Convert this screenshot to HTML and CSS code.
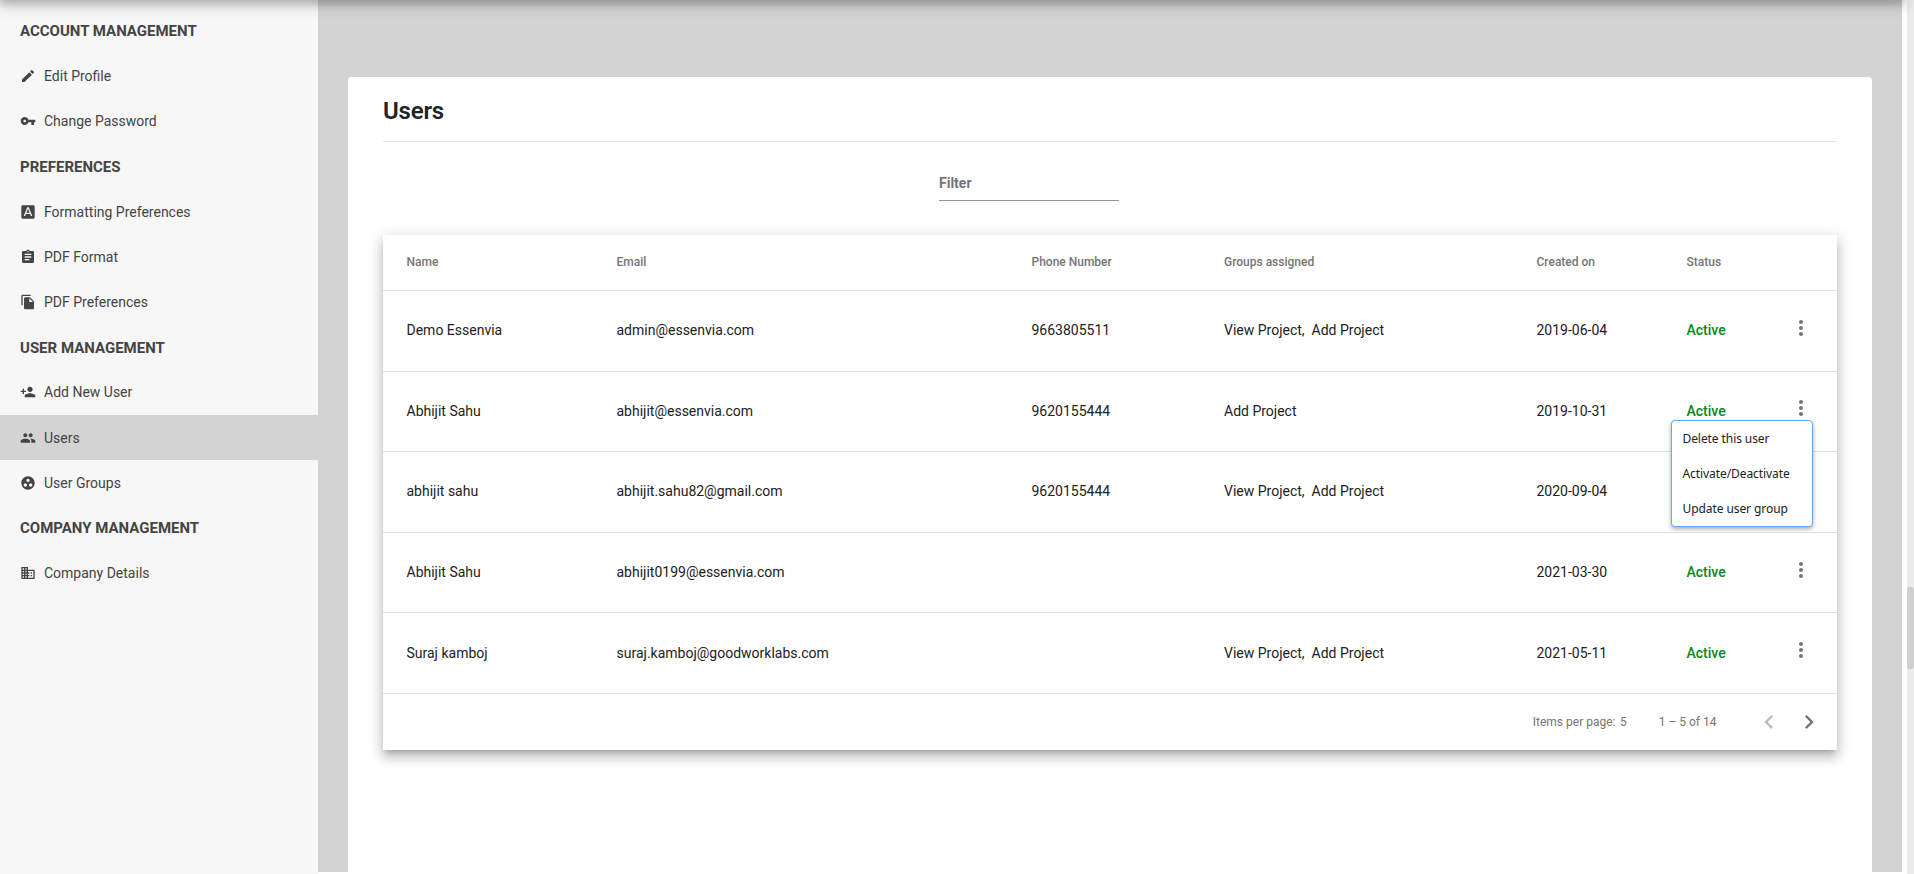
FILE: index.html
```html
<!DOCTYPE html>
<html lang="en">

<head>
    <meta charset="UTF-8" />
    <meta name="viewport" content="width=device-width, initial-scale=1.0" />
    <title>Users</title>
    <link rel="stylesheet" href="styles.css">
</head>

<body>
    <div class="topShadow"></div>
    <div class="layout">
        <!-- left navigation -->
        <div class="sidebar">
            <h4>ACCOUNT MANAGEMENT</h4>
            <a class="item">
                <svg viewBox="0 0 24 24"><path d="M3 17.25V21h3.75L17.81 9.94l-3.75-3.75L3 17.25zM20.71 7.04a1 1 0 0 0 0-1.41l-2.34-2.34a1 1 0 0 0-1.41 0l-1.83 1.83 3.75 3.75 1.83-1.83z" /></svg>
                <span>Edit Profile</span>
            </a>
            <a class="item">
                <svg viewBox="0 0 24 24"><path d="M12.65 10C11.83 7.67 9.61 6 7 6c-3.31 0-6 2.69-6 6s2.69 6 6 6c2.61 0 4.83-1.67 5.65-4H17v4h4v-4h2v-4H12.65zM7 14c-1.1 0-2-.9-2-2s.9-2 2-2 2 .9 2 2-.9 2-2 2z" /></svg>
                <span>Change Password</span>
            </a>
            <h4>PREFERENCES</h4>
            <a class="item">
                <svg viewBox="0 0 24 24"><path fill-rule="evenodd" d="M4 2h16a2 2 0 0 1 2 2v16a2 2 0 0 1-2 2H4a2 2 0 0 1-2-2V4a2 2 0 0 1 2-2zm1.500 16h2.100l1.140-3h6.500l1.120 3h2.140L13.120 5h-2.240L5.500 18zm3.930-4.800L12 6.980l2.570 6.220H9.430z" /></svg>
                <span>Formatting Preferences</span>
            </a>
            <a class="item">
                <svg viewBox="0 0 24 24"><path d="M19 3h-4.180C14.400 1.840 13.300 1 12 1c-1.300 0-2.400.84-2.820 2H5c-1.100 0-2 .9-2 2v14c0 1.100.9 2 2 2h14c1.100 0 2-.9 2-2V5c0-1.100-.9-2-2-2zm-7 0c.55 0 1 .45 1 1s-.45 1-1 1-1-.45-1-1 .45-1 1-1zm2 14H7v-2h7v2zm3-4H7v-2h10v2zm0-4H7V7h10v2z" /></svg>
                <span>PDF Format</span>
            </a>
            <a class="item">
                <svg viewBox="0 0 24 24"><path d="M16 1H4c-1.100 0-2 .9-2 2v14h2V3h12V1zm-1 4l6 6v10c0 1.100-.9 2-2 2H7.990C6.890 23 6 22.100 6 21l.01-14c0-1.100.89-2 1.990-2h7zm-1 7h5.500L14 6.500V12z" /></svg>
                <span>PDF Preferences</span>
            </a>
            <h4>USER MANAGEMENT</h4>
            <a class="item">
                <svg viewBox="0 0 24 24"><path d="M15 12c2.210 0 4-1.790 4-4s-1.790-4-4-4-4 1.790-4 4 1.790 4 4 4zm-9-2V7H4v3H1v2h3v3h2v-3h3v-2H6zm9 4c-2.670 0-8 1.340-8 4v2h16v-2c0-2.660-5.330-4-8-4z" /></svg>
                <span>Add New User</span>
            </a>
            <a class="item active">
                <svg viewBox="0 0 24 24"><path d="M16 11c1.660 0 2.990-1.340 2.990-3S17.660 5 16 5s-3 1.340-3 3 1.340 3 3 3zm-8 0c1.660 0 2.990-1.340 2.990-3S9.660 5 8 5 5 6.340 5 8s1.340 3 3 3zm0 2c-2.330 0-7 1.170-7 3.500V19h14v-2.500c0-2.330-4.670-3.500-7-3.500zm8 0c-.29 0-.62.02-.97.05 1.160.84 1.970 1.970 1.970 3.450V19h6v-2.500c0-2.330-4.670-3.500-7-3.500z" /></svg>
                <span>Users</span>
            </a>
            <a class="item">
                <svg viewBox="0 0 24 24"><path d="M12 2C6.480 2 2 6.480 2 12s4.480 10 10 10 10-4.480 10-10S17.520 2 12 2zM8 17.500c-1.380 0-2.500-1.120-2.500-2.500s1.120-2.500 2.500-2.500 2.500 1.120 2.500 2.500-1.120 2.500-2.500 2.500zM9.500 8c0-1.380 1.120-2.500 2.500-2.500s2.500 1.120 2.500 2.500-1.120 2.500-2.500 2.500S9.500 9.380 9.500 8zm6.500 9.500c-1.380 0-2.500-1.120-2.500-2.500s1.120-2.500 2.500-2.500 2.500 1.120 2.500 2.500-1.120 2.500-2.500 2.500z" /></svg>
                <span>User Groups</span>
            </a>
            <h4>COMPANY MANAGEMENT</h4>
            <a class="item">
                <svg viewBox="0 0 24 24"><path d="M12 7V3H2v18h20V7H12zM6 19H4v-2h2v2zm0-4H4v-2h2v2zm0-4H4V9h2v2zm0-4H4V5h2v2zm4 12H8v-2h2v2zm0-4H8v-2h2v2zm0-4H8V9h2v2zm0-4H8V5h2v2zm10 12h-8v-2h2v-2h-2v-2h2v-2h-2V9h8v10zm-2-8h-2v2h2v-2zm0 4h-2v2h2v-2z" /></svg>
                <span>Company Details</span>
            </a>
        </div>

        <!-- page content -->
        <div class="main">
            <div class="card">
                <h2>Users</h2>
                <div class="filter">Filter</div>
                <div class="tableBox">
                    <table>
                        <thead>
                            <tr>
                                <th class="name">Name</th>
                                <th class="email">Email</th>
                                <th class="phone">Phone Number</th>
                                <th class="groups">Groups assigned</th>
                                <th class="created">Created on</th>
                                <th class="status">Status</th>
                                <th></th>
                            </tr>
                        </thead>
                        <tbody id="list"></tbody>
                    </table>
                    <div class="paginator">
                        <span>Items per page:</span>
                        <span class="size">5</span>
                        <span class="range">1 – 5 of 14</span>
                        <svg class="prev" viewBox="0 0 24 24"><path d="M15.410 7.410L14 6l-6 6 6 6 1.410-1.410L10.830 12z" /></svg>
                        <svg viewBox="0 0 24 24"><path d="M10 6L8.590 7.410 13.170 12l-4.580 4.590L10 18l6-6z" /></svg>
                    </div>
                </div>
            </div>
        </div>

        <div class="scrollbar">
            <div class="thumb"></div>
        </div>
    </div>

    <script>
        let users = [
            { name: 'Demo Essenvia', email: 'admin@essenvia.com', phone: '9663805511', groups: 'View Project,&nbsp; Add Project', created: '2019-06-04' },
            { name: 'Abhijit Sahu', email: 'abhijit@essenvia.com', phone: '9620155444', groups: 'Add Project', created: '2019-10-31', open: true },
            { name: 'abhijit sahu', email: 'abhijit.sahu82@gmail.com', phone: '9620155444', groups: 'View Project,&nbsp; Add Project', created: '2020-09-04' },
            { name: 'Abhijit Sahu', email: 'abhijit0199@essenvia.com', phone: '', groups: '', created: '2021-03-30' },
            { name: 'Suraj kamboj', email: 'suraj.kamboj@goodworklabs.com', phone: '', groups: 'View Project,&nbsp; Add Project', created: '2021-05-11' },
        ]

        let menu = `
            <ul class="menu">
                <li>Delete this user</li>
                <li>Activate/Deactivate</li>
                <li>Update user group</li>
            </ul>`

        document.querySelector('#list').innerHTML = users.map(function (u) {
            return `
            <tr>
                <td>${u.name}</td>
                <td>${u.email}</td>
                <td>${u.phone}</td>
                <td>${u.groups}</td>
                <td>${u.created}</td>
                <td class="on">Active</td>
                <td class="more">
                    <div class="moreBox">
                        <svg viewBox="0 0 24 24"><path d="M12 8c1.100 0 2-.9 2-2s-.9-2-2-2-2 .9-2 2 .9 2 2 2zm0 2c-1.100 0-2 .9-2 2s.9 2 2 2 2-.9 2-2-.9-2-2-2zm0 6c-1.100 0-2 .9-2 2s.9 2 2 2 2-.9 2-2-.9-2-2-2z" /></svg>
                        ${u.open ? menu : ''}
                    </div>
                </td>
            </tr>`
        }).join('')
    </script>
</body>

</html>
```
FILE: styles.css
```css
* {
    margin: 0;
    padding: 0;
    box-sizing: border-box;
}

body {
    height: 874px;
    overflow: hidden;
    background: #fff;
    font-family: Roboto, sans-serif;
}

ul {
    list-style: none;
}

/* shadow of the toolbar above the page */
.topShadow {
    position: absolute;
    top: -10px;
    left: 0;
    width: 1904px;
    height: 10px;
    box-shadow: 0 4px 5px 0 rgba(0, 0, 0, 0.1), 0 3px 14px 2px rgba(0, 0, 0, 0.25);
    z-index: 5;
}

.layout {
    display: flex;
    height: 874px;
}

.sidebar {
    width: 318px;
    padding-top: 8.3px;
    background: #f7f7f7;
    color: #444;
}

.sidebar h4 {
    height: 45.2px;
    padding-left: 20px;
    line-height: 47px;
    font-size: 15px;
    font-weight: 700;
}

.sidebar .item {
    display: flex;
    align-items: center;
    height: 45.2px;
    padding-left: 20px;
    font-size: 14px;
}

.sidebar .item svg {
    width: 16px;
    height: 16px;
    margin-right: 8px;
    fill: #444;
}

.sidebar .active {
    background: #d3d3d3;
}

.main {
    width: 1584px;
    height: 872px;
    padding: 77px 30px 0;
    background: #d3d3d3;
}

.card {
    height: 795px;
    padding: 0 35px;
    background: #fff;
    border-radius: 4px 4px 0 0;
}

.card h2 {
    height: 65px;
    line-height: 69px;
    border-bottom: 1px solid #e5e5e5;
    color: #212529;
    font-size: 24px;
    font-weight: 600;
    letter-spacing: -0.2px;
}

.filter {
    width: 180px;
    height: 35px;
    margin: 24px 0 34px 556px;
    padding-top: 8px;
    border-bottom: 1px solid #949494;
    color: #757575;
    font-size: 14px;
    font-weight: 700;
    line-height: 18px;
}

.tableBox {
    box-shadow: 0 5px 5px -3px rgba(0, 0, 0, 0.2), 0 8px 10px 1px rgba(0, 0, 0, 0.14), 0 3px 14px 2px rgba(0, 0, 0, 0.12);
}

table {
    width: 1454px;
    table-layout: fixed;
    border-collapse: separate;
    border-spacing: 0;
}

th {
    height: 56px;
    padding-bottom: 2px;
    border-bottom: 1px solid #e0e0e0;
    color: #757575;
    font-size: 12px;
    font-weight: 500;
    text-align: left;
}

td {
    height: 80.6px;
    padding-bottom: 1px;
    border-bottom: 1px solid #e0e0e0;
    color: #212121;
    font-size: 14px;
}

th:first-child,
td:first-child {
    padding-left: 23.5px;
}

.name {
    width: 233.5px;
}

.email {
    width: 415px;
}

.phone {
    width: 192.5px;
}

.groups {
    width: 312.5px;
}

.created {
    width: 150px;
}

.status {
    width: 102.5px;
}

td.on {
    color: #008a17;
    font-weight: 500;
}

.moreBox {
    position: relative;
    width: 24px;
    height: 24px;
    margin-top: -5px;
}

.more svg {
    display: block;
    width: 24px;
    height: 24px;
    fill: #757575;
}

.menu {
    position: absolute;
    top: 24px;
    right: 0;
    width: 142px;
    height: 107px;
    background: #fff;
    border: 1px solid #69a7f0;
    border-radius: 4px;
    box-shadow: 0 2px 4px rgba(0, 0, 0, 0.35);
    z-index: 2;
}

.menu li {
    height: 35px;
    padding-left: 10.5px;
    line-height: 36px;
    font-family: "Noto Sans", sans-serif;
    font-size: 12px;
    letter-spacing: -0.08px;
}

.paginator {
    display: flex;
    align-items: center;
    justify-content: flex-end;
    height: 56px;
    padding-right: 14px;
    color: #757575;
    font-size: 12px;
}

.size {
    margin: 0 32px 0 4.5px;
}

.range {
    margin-right: 38.5px;
}

.paginator svg {
    width: 28px;
    height: 28px;
    fill: #757575;
}

.paginator .prev {
    margin-right: 12px;
    fill: #bdbdbd;
}

.scrollbar {
    width: 7px;
    margin-left: 5px;
    padding-top: 587px;
    background: #ebebeb;
}

.thumb {
    height: 82px;
    background: #d0d0d0;
    border-radius: 2px;
}
```
